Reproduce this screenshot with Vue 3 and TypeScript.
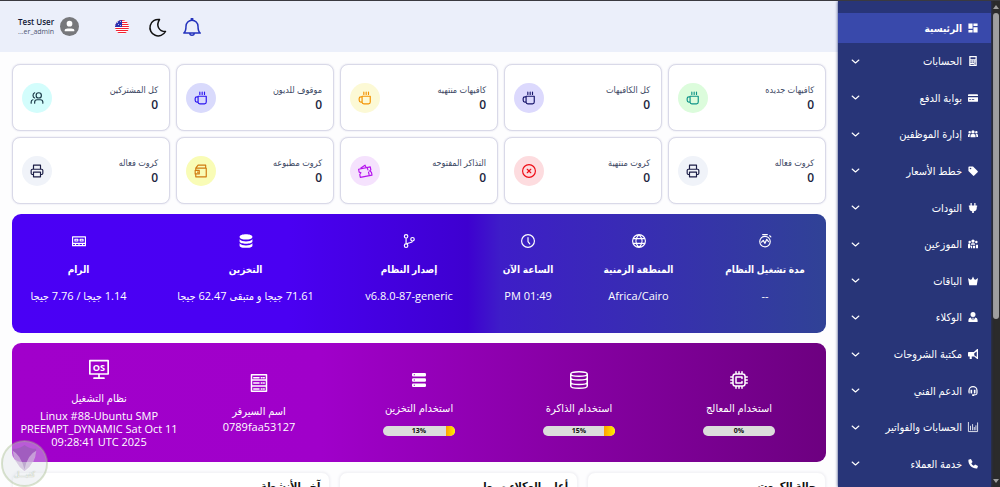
<script setup lang="ts">
interface Icon {
  fill?: boolean
  paths: string[]
}

const icons: Record<string, Icon> = {
  dashboard: { fill: true, paths: ['M1 1h10v13H1zM1 17h10v6H1zM13 1h10v6H13zM13 10h10v13H13z'] },
  calculator: { fill: true, paths: ['M3 0h18v24H3zM6 3v5h12V3zM6 11v2h3v-2zM11 11v2h3v-2zM16 11v2h2v-2zM6 15v2h3v-2zM11 15v2h3v-2zM16 15v6h2v-6zM6 19v2h8v-2z'] },
  card: { fill: true, paths: ['M2 3h20a2 2 0 0 1 2 2v2H0V5a2 2 0 0 1 2-2zM0 10h24v9a2 2 0 0 1-2 2H2a2 2 0 0 1-2-2zM3 15v2h4v-2zM9 15v2h6v-2z'] },
  group: { fill: true, paths: ['M12 3a4 4 0 1 1 0 8 4 4 0 0 1 0-8zM4 5a3 3 0 1 1 0 6 3 3 0 0 1 0-6zM20 5a3 3 0 1 1 0 6 3 3 0 0 1 0-6zM6 20v-4a4 4 0 0 1 4-4h4a4 4 0 0 1 4 4v4zM0 19v-4a3 3 0 0 1 3-3h3a6 6 0 0 0-2 4v3zM24 19v-4a3 3 0 0 0-3-3h-3a6 6 0 0 1 2 4v3z'] },
  tag: { fill: true, paths: ['M1 3a2 2 0 0 1 2-2h9l11 11a2 2 0 0 1 0 3l-8 8a2 2 0 0 1-3 0L1 12zM6 4a2 2 0 1 0 0 4 2 2 0 0 0 0-4z'] },
  plug: { fill: true, paths: ['M6 0h3v6h6V0h3v6h4v3h-1v3a8 8 0 0 1-7 8v4h-4v-4a8 8 0 0 1-7-8V9H2V6h4z'] },
  dealers: { fill: true, paths: ['M12 1a4 4 0 1 1 0 8 4 4 0 0 1 0-8zM4 4a3 3 0 1 1 0 6 3 3 0 0 1 0-6zM20 4a3 3 0 1 1 0 6 3 3 0 0 1 0-6zM7 14v-2q0-2 3-2h4q3 0 3 2v2zM0 22v-8q0-3 3-3h2v5h5v6H7v-4H5v4zM12 16h5v6h-5zM19 14h5v8h-5z'] },
  crown: { fill: true, paths: ['M0 5l6 4 3-1 3-7 3 7 3 1 6-4-3 17H3z'] },
  agent: { fill: true, paths: ['M12 0a6 6 0 1 1 0 12 6 6 0 0 1 0-12zM1 24v-5q0-5 6-6l3 7 1-4-1-2h4l-1 2 1 4 3-7q6 1 6 6v5z'] },
  megaphone: { fill: true, paths: ['M22 0h2v24h-2l-7-6H9v6H4v-6H2a2 2 0 0 1-2-2V9a2 2 0 0 1 2-2h12zM21 6l-6 4v5l6 4z'] },
  headset: { fill: true, paths: ['M12 0a11 11 0 0 1 11 11v6a5 5 0 0 1-5 5h-3v2h-5v-4h8a2 2 0 0 0 2-2v-7a8 8 0 0 0-16 0v7H2A9 9 0 0 1 1 11 11 11 0 0 1 12 0zM6 9h4v9H8a2 2 0 0 1-2-2zM14 9h4v7a2 2 0 0 1-2 2h-2z'] },
  chart: { paths: ['M1 1v22h22V2', 'M6 19v-9M11 19V6M15 19v-6M19 19V9'] },
  phone: { fill: true, paths: ['M7 0 1 2C0 14 10 24 22 23l2-6-7-4-3 3c-3-1-5-4-6-6l3-3z'] },
  chevron: { paths: ['m3 8 9 8 9-8'] },
  bell: { paths: ['M1 20c3-2 3-5 3-9a8 8 0 0 1 16 0c0 4 0 7 3 9zM9 20a3 3 0 0 0 6 0M11 3V1h2v2'] },
  moon: { paths: ['M14 2A11 11 0 1 0 22 18C13 18 9 10 14 2z'] },
  cup: { paths: ['M7 9h14v10a3 3 0 0 1-3 3h-8a3 3 0 0 1-3-3zM7 10H5a3 3 0 0 0-3 3v3a3 3 0 0 0 3 3h2M10 2v4M14 2v4M18 2v4'] },
  users: { paths: ['M15 3a4 4 0 1 1 0 9 4 4 0 0 1 0-9zM8 21v-2a4 4 0 0 1 4-4h6a4 4 0 0 1 4 4v2M8 3a5 5 0 0 0 0 9M2 21v-2a4 4 0 0 1 3-4'] },
  printer: { paths: ['M6 9V2h12v7M6 18H4a2 2 0 0 1-2-2v-5a2 2 0 0 1 2-2h16a2 2 0 0 1 2 2v5a2 2 0 0 1-2 2h-2M6 14h12v8H6z'] },
  close: { paths: ['M12 1a11 11 0 1 1 0 22 11 11 0 0 1 0-22zM9 9l6 6M15 9l-6 6'] },
  ticket: { paths: ['M1 9l20-4 1 5-2 2 3 2 1 5-20 4-1-5 2-3-3-1zM5 7l7-5 2 4M16 7l1 3M18 14l1 4'] },
  wallet: { paths: ['M3 7h18v15H3v-4M3 11V7l4-5h13v5M2 11h7v6H2zM6 14h1'] },
  stopwatch: { paths: ['M12 4a9 9 0 1 1 0 18 9 9 0 0 1 0-18zM8 1h8M20 3l2 2M6 14l3-3 3 5 3-7 3 4'] },
  globe: { paths: ['M12 1a11 11 0 1 1 0 22 11 11 0 0 1 0-22zM2 8h20M2 16h20M12 1c-7 7-7 15 0 22 7-7 7-15 0-22z'] },
  clock: { paths: ['M12 1a11 11 0 1 1 0 22 11 11 0 0 1 0-22zM12 6v7l3 4'] },
  branch: { paths: ['M7 1a3 3 0 1 1 0 6 3 3 0 0 1 0-6zM7 17a3 3 0 1 1 0 6 3 3 0 0 1 0-6zM18 6a3 3 0 1 1 0 6 3 3 0 0 1 0-6zM7 7v10M18 12c0 4-6 2-10 5'] },
  database: { fill: true, paths: ['M1 5c0-6 22-6 22 0S1 11 1 5zM1 9c4 5 18 5 22 0v4c0 5-22 5-22 0zM1 16c4 5 18 5 22 0v4c0 5-22 5-22 0z'] },
  ram: { paths: ['M1 5h22v15H1zM1 16h22M5 9h5v3H5zM14 9h5v3h-5zM6 16v4M12 16v4M18 16v4'] },
  chip: { paths: ['M7 4h10a3 3 0 0 1 3 3v10a3 3 0 0 1-3 3H7a3 3 0 0 1-3-3V7a3 3 0 0 1 3-3zM16 14v2H8V8h8v2M8 1v3M12 1v3M16 1v3M8 20v3M12 20v3M16 20v3M1 8h3M1 12h3M1 16h3M20 8h3M20 12h3M20 16h3'] },
  disks: { paths: ['M1 4c0-4 22-4 22 0v16c0 4-22 4-22 0zM1 4c0 4 22 4 22 0M1 9c0 4 22 4 22 0M1 15c0 4 22 4 22 0'] },
  stack: { fill: true, paths: ['M2 0h20a2 2 0 0 1 2 2v2a2 2 0 0 1-2 2H2a2 2 0 0 1-2-2V2a2 2 0 0 1 2-2zM3 2v2h2V2zM2 9h20a2 2 0 0 1 2 2v2a2 2 0 0 1-2 2H2a2 2 0 0 1-2-2v-2a2 2 0 0 1 2-2zM3 11v2h2v-2zM2 18h20a2 2 0 0 1 2 2v2a2 2 0 0 1-2 2H2a2 2 0 0 1-2-2v-2a2 2 0 0 1 2-2zM3 20v2h2v-2z'] },
  server: { paths: ['M2 1h20v22H2zM2 8h20M2 16h20M5 5h7M5 12h7M5 20h7M15 5h1M18 5h1M15 12h1M18 12h1M15 20h1M18 20h1'] },
}

const menu = [
  { label: 'الحسابات', icon: 'calculator' },
  { label: 'بوابة الدفع', icon: 'card' },
  { label: 'إدارة الموظفين', icon: 'group' },
  { label: 'خطط الأسعار', icon: 'tag' },
  { label: 'النودات', icon: 'plug' },
  { label: 'الموزعين', icon: 'dealers' },
  { label: 'الباقات', icon: 'crown' },
  { label: 'الوكلاء', icon: 'agent' },
  { label: 'مكتبة الشروحات', icon: 'megaphone' },
  { label: 'الدعم الفني', icon: 'headset' },
  { label: 'الحسابات والفواتير', icon: 'chart' },
  { label: 'خدمة العملاء', icon: 'phone' },
]

const stats = [
  { label: 'كافيهات جديده', value: 0, icon: 'cup', tone: 'green' },
  { label: 'كل الكافيهات', value: 0, icon: 'cup', tone: 'navy' },
  { label: 'كافيهات منتهيه', value: 0, icon: 'cup', tone: 'amber' },
  { label: 'موقوف للديون', value: 0, icon: 'cup', tone: 'blue' },
  { label: 'كل المشتركين', value: 0, icon: 'users', tone: 'cyan' },
  { label: 'كروت فعاله', value: 0, icon: 'printer', tone: 'grey' },
  { label: 'كروت منتهية', value: 0, icon: 'close', tone: 'red' },
  { label: 'التذاكر المفتوحه', value: 0, icon: 'ticket', tone: 'purple' },
  { label: 'كروت مطبوعه', value: 0, icon: 'wallet', tone: 'yellow' },
  { label: 'كروت فعاله', value: 0, icon: 'printer', tone: 'grey' },
]

const system = [
  { label: 'مدة تشغيل النظام', value: '--', icon: 'stopwatch' },
  { label: 'المنطقة الزمنية', value: 'Africa/Cairo', icon: 'globe' },
  { label: 'الساعة الآن', value: '01:49 PM', icon: 'clock' },
  { label: 'إصدار النظام', value: 'v6.8.0-87-generic', icon: 'branch' },
  { label: 'التخزين', value: '71.61 جيجا و متبقى 62.47 جيجا', icon: 'database' },
  { label: 'الرام', value: '1.14 جيجا / 7.76 جيجا', icon: 'ram' },
]

const usage = [
  { label: 'استخدام المعالج', percent: 0, icon: 'chip' },
  { label: 'استخدام الذاكرة', percent: 15, icon: 'disks' },
  { label: 'استخدام التخزين', percent: 13, icon: 'stack' },
]

const panels = ['حالة الكروت', 'أعلى الوكلاء مبيعا', 'آخر الأنشطة']
</script>

<template>
  <div class="page" dir="rtl">
    <div class="scrollbar" aria-hidden="true">
      <span class="arrow up"></span>
      <span class="thumb"></span>
      <span class="arrow down"></span>
    </div>

    <nav class="sidebar">
      <a href="#" class="item active">
        <svg class="item-icon solid" viewBox="0 0 24 24"><path v-for="d in icons.dashboard.paths" :key="d" :d="d" /></svg>
        <span class="item-label">الرئيسية</span>
      </a>
      <div class="menu">
        <button v-for="m in menu" :key="m.label" type="button" class="item">
          <svg class="item-icon" :class="icons[m.icon].fill ? 'solid' : 'line'" viewBox="0 0 24 24">
            <path v-for="d in icons[m.icon].paths" :key="d" :d="d" />
          </svg>
          <span class="item-label">{{ m.label }}</span>
          <svg class="chevron line" viewBox="0 0 24 24"><path v-for="d in icons.chevron.paths" :key="d" :d="d" /></svg>
        </button>
      </div>
    </nav>

    <div class="main">
      <header class="topbar">
        <button type="button" class="tool bell" aria-label="الإشعارات">
          <svg class="line" viewBox="0 0 24 24"><path v-for="d in icons.bell.paths" :key="d" :d="d" /></svg>
        </button>
        <button type="button" class="tool moon" aria-label="الوضع الليلي">
          <svg class="line" viewBox="0 0 24 24"><path v-for="d in icons.moon.paths" :key="d" :d="d" /></svg>
        </button>
        <button type="button" class="tool flag" aria-label="اللغة">
          <svg viewBox="0 0 14 14">
            <defs><clipPath id="flag-round"><circle cx="7" cy="7" r="7" /></clipPath></defs>
            <g clip-path="url(#flag-round)">
              <rect width="14" height="14" fill="#fff" />
              <g fill="#f3202f" shape-rendering="crispEdges">
                <rect v-for="n in 7" :key="n" :y="n * 2 - 2" width="14" height="1" />
              </g>
              <rect width="7" height="7" fill="#2a2fb0" />
              <path d="M2 2h1v1H2zM5 1h1v1H5zM3 4h1v1H3zM5 5h1v1H5z" fill="#b9bbee" />
            </g>
          </svg>
        </button>
        <button type="button" class="profile">
          <svg class="avatar" viewBox="0 0 20 20">
            <circle cx="10" cy="10" r="10" fill="#77787b" />
            <circle cx="10" cy="7" r="3" fill="#fff" />
            <path d="M5 15v-1q0-2 3-2h4q3 0 3 2v1z" fill="#fff" />
          </svg>
          <span class="who" dir="ltr">
            <b>Test User</b>
            <small>...er_admin</small>
          </span>
        </button>
      </header>

      <main class="content">
        <section class="stats">
          <article v-for="(s, i) in stats" :key="i" class="stat">
            <div class="stat-text">
              <span class="stat-label">{{ s.label }}</span>
              <strong>{{ s.value }}</strong>
            </div>
            <span class="badge" :class="s.tone">
              <svg class="line" viewBox="0 0 24 24"><path v-for="d in icons[s.icon].paths" :key="d" :d="d" /></svg>
            </span>
          </article>
        </section>

        <section class="banner system">
          <div v-for="s in system" :key="s.label" class="sys">
            <svg class="sys-icon" :class="icons[s.icon].fill ? 'solid' : 'line'" viewBox="0 0 24 24">
              <path v-for="d in icons[s.icon].paths" :key="d" :d="d" />
            </svg>
            <h3>{{ s.label }}</h3>
            <p>{{ s.value }}</p>
          </div>
        </section>

        <section class="banner usage">
          <div v-for="u in usage" :key="u.label" class="use">
            <svg class="use-icon" :class="[icons[u.icon].fill ? 'solid small' : 'line']" viewBox="0 0 24 24">
              <path v-for="d in icons[u.icon].paths" :key="d" :d="d" />
            </svg>
            <h3>{{ u.label }}</h3>
            <div class="bar" role="progressbar" :aria-label="u.label" :aria-valuenow="u.percent" aria-valuemin="0" aria-valuemax="100">
              <span class="fill" :style="{ width: u.percent + '%' }"></span>
              <span class="percent">{{ u.percent }}%</span>
            </div>
          </div>
          <div class="use">
            <svg class="use-icon line" viewBox="0 0 24 24"><path v-for="d in icons.server.paths" :key="d" :d="d" /></svg>
            <h3>اسم السيرفر</h3>
            <p>0789faa53127</p>
          </div>
          <div class="use os">
            <svg class="use-icon line" viewBox="0 0 24 24">
              <path d="M1 2h22v16H1zM12 18v5M6 23h12" />
              <text x="12" y="14" text-anchor="middle">OS</text>
            </svg>
            <h3>نظام التشغيل</h3>
            <p dir="ltr">Linux #88-Ubuntu SMP PREEMPT_DYNAMIC Sat Oct 11 09:28:41 UTC 2025</p>
          </div>
        </section>

        <section class="panels">
          <article v-for="p in panels" :key="p" class="panel"><h2>{{ p }}</h2></article>
        </section>
      </main>
    </div>

    <div class="stamp" aria-hidden="true">
      <svg viewBox="0 0 50 50">
        <circle cx="25" cy="25" r="23" fill="#dfe4e8" fill-opacity=".4" stroke="#a3b886" stroke-opacity=".4" stroke-width="2" />
        <path d="M13 10q7 0 12-4 5 4 12 4 0 14-12 23-12-9-12-23z" fill="#8a5fa8" fill-opacity=".5" />
        <path d="M13 12q8 4 12 19 3-15 12-19-1 14-12 22-11-8-12-22z" fill="#fff" fill-opacity=".4" />
      </svg>
      <span>كفيـــل</span>
    </div>
  </div>
</template>

<style>
body {
  margin: 0;
}
</style>

<style scoped>
* {
  box-sizing: border-box;
}
.page {
  position: relative;
  display: flex;
  height: 100vh;
  overflow: hidden;
  border-top: 1px solid #3a3a40;
  background: #fdfdfe;
  font-family: "Open Sans", "Noto Sans", "DejaVu Sans Condensed", sans-serif;
  color: #1d2540;
}
button {
  border: 0;
  padding: 0;
  background: none;
  font: inherit;
  color: inherit;
  cursor: pointer;
}
h2,
h3,
p {
  margin: 0;
}
svg {
  display: block;
  overflow: visible;
}
.line {
  fill: none;
  stroke: currentColor;
  stroke-width: 2;
  stroke-linecap: round;
  stroke-linejoin: round;
}
.solid {
  fill: currentColor;
  fill-rule: evenodd;
}

.scrollbar {
  display: flex;
  flex: none;
  flex-direction: column;
  align-items: center;
  width: 9px;
  padding: 4px 0;
  background: #2b2b2b;
}
.thumb {
  width: 6px;
  height: 64%;
  margin: 4px 0 auto;
  border-radius: 3px;
  background: #9f9f9f;
}
.arrow {
  border: 3px solid transparent;
}
.up {
  border-top: 0;
  border-bottom: 4px solid #a0a0a0;
}
.down {
  border-bottom: 0;
  border-top: 4px solid #a0a0a0;
}

.sidebar {
  z-index: 1;
  display: flex;
  flex: none;
  flex-direction: column;
  width: 153px;
  padding: 12px 0 5px;
  background: #283578;
  box-shadow: 0 0 3px #283578;
  color: #fff;
}
.item {
  display: flex;
  align-items: center;
  width: 100%;
  min-height: 30px;
  padding: 0 13px;
  color: #fff;
  font-size: 11px;
  font-weight: 500;
  line-height: 16px;
  text-decoration: none;
  white-space: nowrap;
}
.active {
  background: #3949ab;
  font-size: 10px;
  font-weight: 700;
}
.menu {
  display: flex;
  flex: 1;
  flex-direction: column;
  justify-content: space-between;
}
.menu .item {
  min-height: 36px;
}
.item-icon {
  flex: none;
  width: 10px;
  height: 10px;
  margin-left: 6px;
}
.chevron {
  flex: none;
  width: 9px;
  height: 9px;
  margin-right: auto;
  stroke-width: 3;
}

.main {
  flex: 1;
  min-width: 0;
}
.topbar {
  display: flex;
  align-items: center;
  justify-content: flex-end;
  height: 51px;
  padding-left: 18px;
  background: #ebeffa;
}
.bell {
  color: #2433bd;
}
.bell svg,
.moon svg {
  width: 18px;
  height: 18px;
}
.moon {
  margin-right: 16px;
  color: #111;
}
.flag {
  margin: 0 34px 0 36px;
  margin: 0 20px 0 36px;
}
.tool.flag {
  margin: 0 20px 0 36px;
}
.flag svg {
  width: 14px;
  height: 14px;
}
.profile {
  display: flex;
  align-items: center;
  gap: 6px;
}
.avatar {
  width: 19px;
  height: 19px;
}
.who {
  display: flex;
  flex-direction: column;
  text-align: right;
}
.who b {
  color: #111735;
  font-size: 8px;
  font-weight: 600;
  line-height: 10px;
}
.who small {
  color: #4d5672;
  font-size: 7px;
  line-height: 9px;
}

.content {
  padding: 12px;
}
.stats {
  display: grid;
  grid-template-columns: repeat(5, minmax(0, 1fr));
  gap: 6px;
}
.stat {
  display: flex;
  align-items: center;
  justify-content: space-between;
  min-height: 67px;
  padding: 0 11px 0 9px;
  border: 1px solid #d9d9e8;
  border-radius: 8px;
  background: #fff;
  box-shadow: 0 0 2px #dcdcea;
}
.stat-text {
  display: flex;
  flex-direction: column;
  align-items: flex-start;
  white-space: nowrap;
}
.stat-label {
  color: #3b4763;
  font-size: 9px;
  line-height: 15px;
}
.stat strong {
  font-size: 12px;
  font-weight: 600;
  line-height: 16px;
}
.badge {
  display: grid;
  place-items: center;
  width: 30px;
  height: 30px;
  border-radius: 50%;
}
.badge svg {
  width: 14px;
  height: 14px;
}
.green { background: #dcfcdc; color: #0f9488; }
.navy { background: #dcd9fd; color: #17156b; }
.amber { background: #fcf9d5; color: #f39200; }
.blue { background: #d9dafc; color: #2b14f0; }
.cyan { background: #d3fdfc; color: #1b3a47; }
.grey { background: #f0f3f9; color: #1a1c45; }
.red { background: #fddcdf; color: #ee0d16; }
.purple { background: #f5e2fd; color: #b514ee; }
.yellow { background: #f9fcb6; color: #d07a10; }

.banner {
  display: grid;
  min-height: 119px;
  border-radius: 9px;
  color: #fff;
}
.system {
  grid-template-columns: 82fr 69fr 50fr 86fr 139fr 93fr;
  column-gap: 51px;
  margin-top: 10px;
  padding: 20px 20px 0;
  background: linear-gradient(to right, #4a00f5 0%, #4a00f2 34%, #3e00d0 56%, #3e1dc8 60%, #304296 100%);
}
.sys {
  display: flex;
  flex-direction: column;
  align-items: center;
  min-width: 0;
  white-space: nowrap;
}
.sys-icon {
  width: 14px;
  height: 14px;
}
.sys h3 {
  margin-top: 12px;
  font-size: 10px;
  font-weight: 700;
  line-height: 18px;
}
.sys p {
  margin-top: 9px;
  font-size: 11px;
  line-height: 18px;
}
.usage {
  grid-template-columns: repeat(5, minmax(0, 1fr));
  align-items: center;
  margin-top: 10px;
  padding: 0 7px;
  background: linear-gradient(to right, #a100cb 0%, #a000ca 38%, #8700a4 68%, #6d0080 100%);
}
.use {
  display: flex;
  flex-direction: column;
  align-items: center;
  padding-top: 1px;
  text-align: center;
}
.use-icon {
  width: 18px;
  height: 18px;
}
.use-icon.small {
  width: 14px;
  height: 14px;
  margin: 2px 0;
}
.use h3 {
  margin-top: 10px;
  font-size: 11px;
  font-weight: 400;
  line-height: 18px;
}
.use p {
  font-size: 11px;
  line-height: 13px;
}
.os .use-icon {
  width: 20px;
  height: 20px;
}
.os p {
  margin-top: 2px;
}
.os text {
  fill: currentColor;
  stroke: none;
  font-size: 11px;
  font-weight: 700;
}
.bar {
  position: relative;
  width: 72px;
  height: 10px;
  margin-top: 9px;
  overflow: hidden;
  border-radius: 5px;
  background: #dcdcdc;
}
.fill {
  display: block;
  height: 100%;
  background: linear-gradient(to right, #ffa000, #fff200);
}
.percent {
  position: absolute;
  inset: 0;
  color: #111;
  font-size: 7px;
  font-weight: 700;
  line-height: 10px;
}

.panels {
  display: grid;
  grid-template-columns: 3fr 3fr 4fr;
  gap: 9px;
  margin-top: 10px;
}
.panel {
  min-height: 160px;
  padding: 5px 9px;
  border: 1px solid #f4f4f7;
  border-radius: 8px;
  background: #fff;
  box-shadow: 0 0 3px #ececf2;
}
.panel h2 {
  color: #111;
  font-size: 11px;
  font-weight: 700;
  line-height: 16px;
}

.stamp {
  position: absolute;
  bottom: -1px;
  left: 0;
  z-index: 2;
  width: 49px;
  height: 49px;
}
.stamp span {
  position: absolute;
  bottom: 9px;
  left: 0;
  width: 100%;
  color: #ffffffd0;
  font-size: 8px;
  line-height: 10px;
  text-align: center;
  text-shadow: 0 0 1px #8a9a80;
}
</style>
